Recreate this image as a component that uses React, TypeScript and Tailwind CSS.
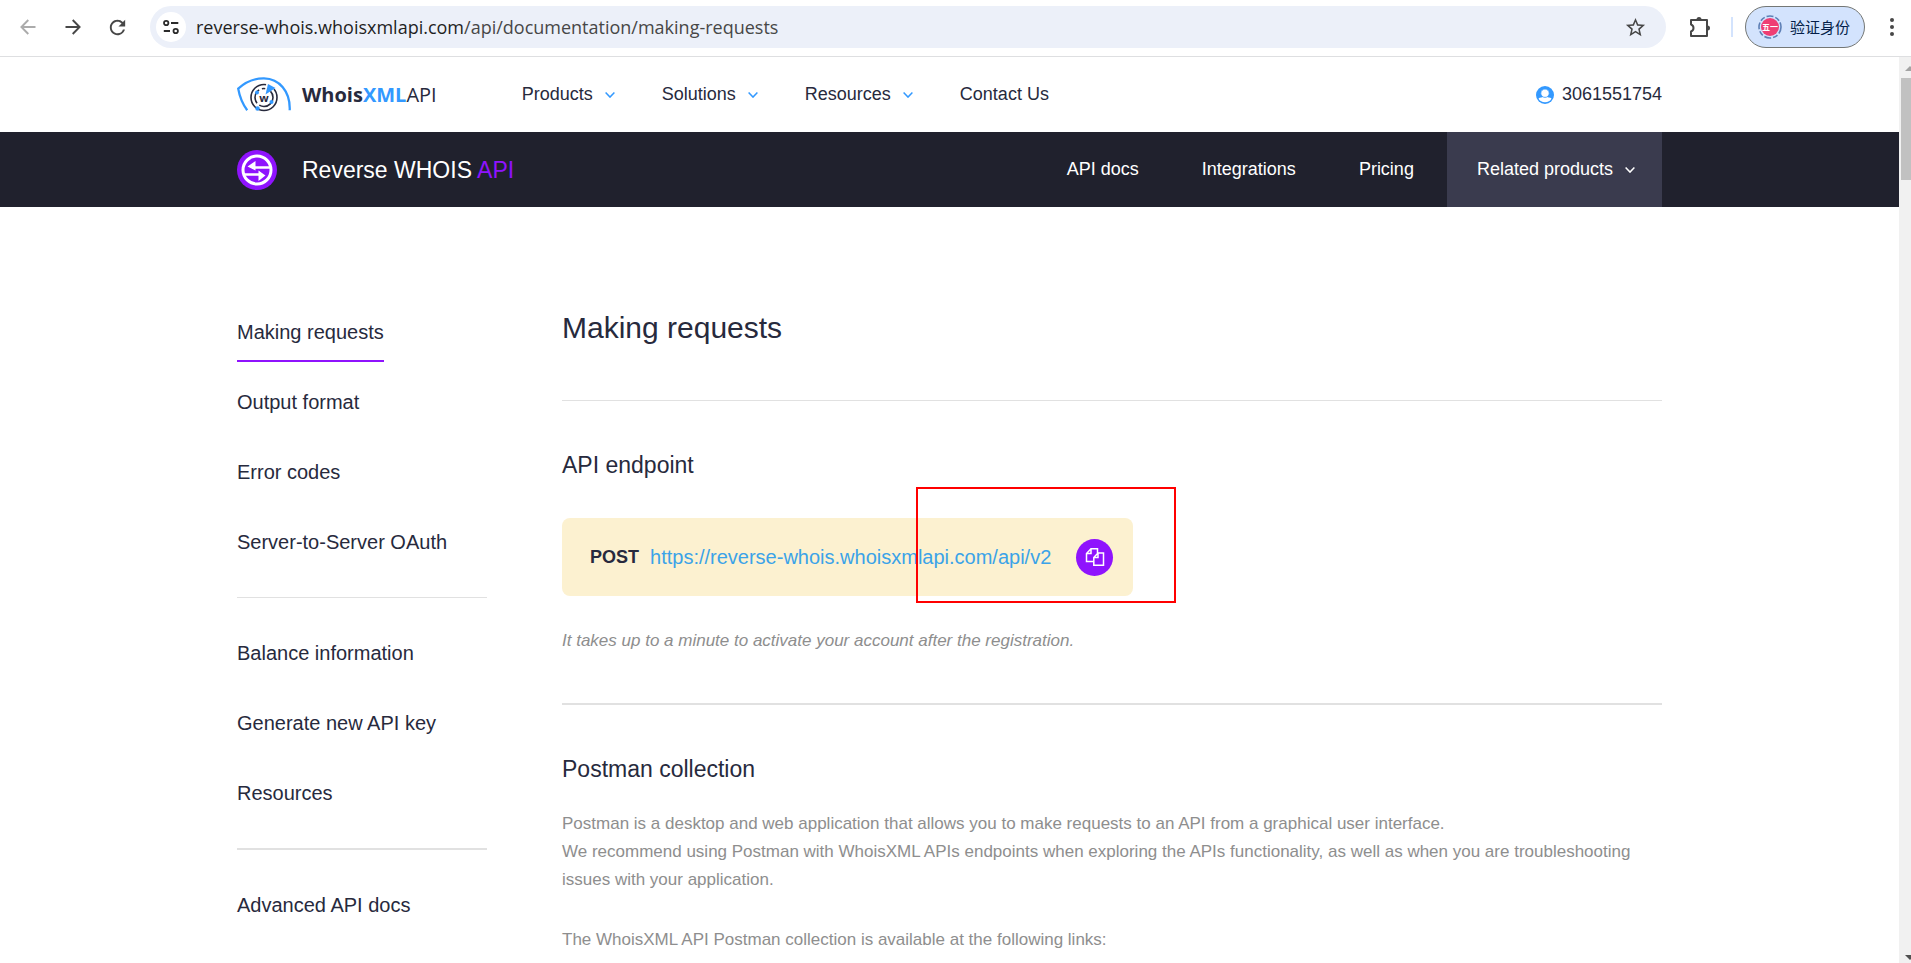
import type { ReactNode } from "react";
import { MdRefresh, MdStarBorder } from "react-icons/md";

const HEADER_LINKS = ["Products", "Solutions", "Resources"];
const PRODUCT_LINKS = ["API docs", "Integrations", "Pricing"];

const SIDEBAR = [
  ["Making requests", "Output format", "Error codes", "Server-to-Server OAuth"],
  ["Balance information", "Generate new API key", "Resources"],
  ["Advanced API docs"],
];

function Chevron({ className }: { className: string }) {
  return (
    <svg className={className} width="10" height="6" viewBox="0 0 10 6" fill="none" stroke="currentColor" strokeWidth="1.5">
      <path d="M0.6 0.6 5 5.1 9.4 0.6" />
    </svg>
  );
}

function Container({ children, className }: { children: ReactNode; className: string }) {
  return <div className={`mx-auto w-full max-w-[1425px] ${className}`}>{children}</div>;
}

function BrowserBar() {
  return (
    <div className="flex h-[57px] shrink-0 items-center border-b border-[#dedfe1] bg-white pb-[2px] pl-5 pr-[17px] text-[#474747]">
      <div className="flex shrink-0 items-center gap-[29px]">
        <button aria-label="Back" className="text-[#ababab]">
          <svg width="16" height="16" viewBox="0 0 16 16" fill="none" stroke="currentColor" strokeWidth="1.9">
            <path d="M15.5 8H1.8M8.3 1 1.4 8l6.9 7" />
          </svg>
        </button>
        <button aria-label="Forward">
          <svg width="16" height="16" viewBox="0 0 16 16" fill="none" stroke="currentColor" strokeWidth="1.9">
            <path d="M0.5 8h13.7M7.7 1l6.9 7-6.9 7" />
          </svg>
        </button>
        <button aria-label="Reload" className="-ml-1">
          <MdRefresh size={23} />
        </button>
      </div>
      <div className="ml-[21px] flex h-[42px] min-w-0 flex-1 items-center rounded-full bg-[#ecf0f9] pl-[6px] pr-[19px]">
        <button aria-label="Site information" className="flex size-[30px] shrink-0 items-center justify-center rounded-full bg-white">
          <svg width="16" height="16" viewBox="0 0 16 16" fill="none" stroke="#2b2b2b" strokeWidth="1.8">
            <circle cx="3.2" cy="4" r="2.2" />
            <path d="M8 4h7.3M0.8 12H7" />
            <circle cx="12.7" cy="12" r="2.2" />
          </svg>
        </button>
        <p className="ml-[10px] flex-1 truncate font-['Open_Sans','Noto_Sans',sans-serif] text-[18px] text-[#474747]">
          <span className="text-[#1f1f1f]">reverse-whois.whoisxmlapi.com</span>
          /api/documentation/making-requests
        </p>
        <button aria-label="Bookmark">
          <MdStarBorder size={23} />
        </button>
      </div>
      <button aria-label="Extensions" className="ml-[22px]">
        <svg width="24" height="24" viewBox="0 0 24 24" fill="none" stroke="currentColor" strokeWidth="2">
          <path d="M3 5H19V21H3V16.500A3.700 3.700 0 0 0 3 9.500Z" strokeLinejoin="round" />
          <path d="M8.500 4.500A2.500 2.500 0 0 1 13.500 4.500ZM19.500 10.500A2.500 2.500 0 0 1 19.500 15.500Z" fill="currentColor" stroke="none" />
        </svg>
      </button>
      <div className="ml-[19px] h-5 w-[2px] bg-[#d3e3fd]" />
      <button className="ml-3 flex h-[42px] items-center gap-2 rounded-full border border-[#747775] bg-[#d3e3fd] pl-3 pr-[14px] font-['Noto_Sans_CJK_SC',sans-serif] text-[15px] text-[#041e49]">
        <svg width="24" height="24" viewBox="0 0 24 24">
          <circle cx="12" cy="12" r="11" fill="none" stroke="#5d7fb5" strokeWidth="1.6" strokeDasharray="7 2 5 2" />
          <circle cx="12" cy="12" r="9" fill="#ef3e74" />
          <text x="12" y="15" fontSize="8" fontWeight="700" textAnchor="middle" fill="#fff">
            五一
          </text>
        </svg>
        验证身份
      </button>
      <button aria-label="Menu" className="ml-[25px]">
        <svg width="4" height="18" viewBox="0 0 4 18" fill="currentColor">
          <circle cx="2" cy="2" r="2" />
          <circle cx="2" cy="9" r="2" />
          <circle cx="2" cy="16" r="2" />
        </svg>
      </button>
    </div>
  );
}

function Logo() {
  return (
    <a href="#" className="flex items-center gap-[10px]">
      <svg width="55" height="35" viewBox="0 0 55 35" fill="none">
        <path d="M10.2 33.2C5.6 27 2.6 19.5 1.2 11.6 8.5 5 17.5 1.2 27 1.3 42 1.6 53.5 14 52.7 33.2" stroke="#3399ff" strokeWidth="2.3" />
        <circle cx="27" cy="20.500" r="13" stroke="#272a3d" strokeWidth="1.600" />
        <circle cx="27" cy="20.500" r="9" stroke="#272a3d" strokeWidth="1.600" strokeDasharray="19 3 15 3" />
        <path d="M27 18 29.5 5.5 40 10.500Z" fill="#fff" />
        <path d="M28.500 17.500 31 7 38.500 11Z" fill="#3399ff" />
        <circle cx="20" cy="15.500" r="2" fill="#3399ff" />
        <circle cx="34.500" cy="25" r="2" fill="#3399ff" />
        <circle cx="20.500" cy="31.500" r="2.200" fill="#3399ff" />
        <text x="27" y="24.500" fontSize="11" fontWeight="700" textAnchor="middle" fill="#272a3d" fontFamily="Open Sans, sans-serif">
          w
        </text>
      </svg>
      <span className="font-['Open_Sans','Noto_Sans',sans-serif] text-[20px] leading-6 text-[#272a3d]">
        <b>Whois</b>
        <b className="text-[#3399ff]">XML</b>
        API
      </span>
    </a>
  );
}

function SiteHeader() {
  return (
    <header className="bg-white text-[18px]">
      <Container className="flex h-[75px] items-center">
        <Logo />
        <nav className="ml-[85px] flex flex-1 items-center gap-[47px]">
          {HEADER_LINKS.map((label) => (
            <a key={label} href="#" className="flex items-center gap-3">
              {label}
              <Chevron className="text-[#3399ff]" />
            </a>
          ))}
          <a href="#">Contact Us</a>
        </nav>
        <a href="#" className="flex items-center gap-[8px]">
          <svg width="18" height="18" viewBox="0 0 18 18">
            <circle cx="9" cy="9" r="9" fill="#3399ff" />
            <path d="M2.500 12.500C5 10.500 13 10.500 15.500 12.500 13.500 17.500 4.500 17.500 2.500 12.500Z" fill="#fff" />
            <circle cx="9" cy="7.200" r="4.200" fill="#fff" stroke="#3399ff" strokeWidth="0.800" />
          </svg>
          3061551754
        </a>
      </Container>
    </header>
  );
}

function ProductBar() {
  return (
    <div className="bg-[#20212d] text-white">
      <Container className="flex h-[75px] items-center text-[18px]">
        <svg width="40" height="40" viewBox="0 0 40 40" fill="none">
          <circle cx="20" cy="20" r="20" fill="#8f13fd" />
          <circle cx="20" cy="20" r="14" stroke="#fff" strokeWidth="3" />
          <path d="M34 17.500H15M6 24.500H25" stroke="#fff" strokeWidth="2.500" />
          <path d="M10.500 16.500 18.500 11V20.500ZM28.500 25.500 21.500 20.500V31Z" fill="#fff" />
        </svg>
        <a href="#" className="ml-[25px] flex-1 text-[23px] leading-7">
          Reverse WHOIS <span className="text-[#8f13fd]">API</span>
        </a>
        <nav className="flex items-center gap-[63px] pr-[33px]">
          {PRODUCT_LINKS.map((label) => (
            <a key={label} href="#">
              {label}
            </a>
          ))}
        </nav>
        <button className="flex h-full items-center gap-3 bg-[#3a3b4e] pl-[30px] pr-[27px]">
          Related products
          <Chevron className="text-white" />
        </button>
      </Container>
    </div>
  );
}

function Sidebar() {
  return (
    <aside className="w-[250px] shrink-0 pt-[5px] text-[20px] leading-8">
      {SIDEBAR.map((group, i) => (
        <ul
          key={i}
          className={`flex flex-col gap-6 border-[#e1e1e1] ${i === 0 ? "" : "pt-[39px]"} ${
            i === 0 ? "border-b pb-[25px]" : i === 1 ? "border-b-2 pb-[25px]" : ""
          }`}
        >
          {group.map((label) => (
            <li key={label}>
              <a
                href="#"
                className={`inline-block border-b-2 pb-3 align-top ${
                  label === "Making requests" ? "border-[#8f13fd]" : "border-transparent"
                }`}
              >
                {label}
              </a>
            </li>
          ))}
        </ul>
      ))}
    </aside>
  );
}

function Endpoint() {
  return (
    <div className="relative mt-[39px] flex h-[78px] w-fit items-center rounded-lg bg-[#fcf1d0] pl-7 pr-5">
      <b className="text-[18px]">POST</b>
      <a href="#" className="ml-[11px] text-[20px] text-[#3ba3e8]">
        https://reverse-whois.whoisxmlapi.com/api/v2
      </a>
      <button aria-label="Copy" className="ml-[25px] flex size-[37px] items-center justify-center rounded-full bg-[#8f13fd]">
        <svg width="20" height="20" viewBox="0 0 20 20" fill="none" stroke="#fff" strokeWidth="1.500">
          <path d="M8.500 14.500H1.500V6.500L6 1.800H12.500V6M6 2V6.500H1.500" />
          <path d="M8.800 10.500 13 6H18.500V18.300H8.800ZM13 6V10.500H8.800" />
        </svg>
      </button>
      <div className="pointer-events-none absolute -right-[43px] -top-[31px] h-[116px] w-[260px] border-2 border-[#ff0000]" />
    </div>
  );
}

function Content() {
  return (
    <main className="min-w-0 flex-1 text-[17px] leading-7">
      <h1 className="text-[30px] leading-[34px]">Making requests</h1>
      <hr className="mt-[55px] border-t border-[#e1e1e1]" />
      <h2 className="mt-[50px] text-[23px]">API endpoint</h2>
      <Endpoint />
      <p className="mt-[31px] italic text-[#8e8e8e]">It takes up to a minute to activate your account after the registration.</p>
      <hr className="mt-[48px] border-t-2 border-[#e1e1e1]" />
      <h2 className="mt-[50px] text-[23px]">Postman collection</h2>
      <p className="mt-[27px] text-[#8e8e8e]">
        Postman is a desktop and web application that allows you to make requests to an API from a graphical user interface.
        <br />
        We recommend using Postman with WhoisXML APIs endpoints when exploring the APIs functionality, as well as when you are
        troubleshooting issues with your application.
      </p>
      <p className="mt-8 text-[#8e8e8e]">The WhoisXML API Postman collection is available at the following links:</p>
    </main>
  );
}

function Scrollbar() {
  return (
    <div className="flex w-3 shrink-0 flex-col overflow-hidden bg-[#f1f1f1] pl-[2px]">
      <svg className="ml-1 mt-[9px] shrink-0" width="10" height="5" viewBox="0 0 10 5" fill="#a3a3a3">
        <path d="M5 0 10 5H0Z" />
      </svg>
      <div className="mt-[7px] h-[102px] bg-[#c1c1c1]" />
      <svg className="mb-[3px] ml-1 mt-auto shrink-0" width="10" height="5" viewBox="0 0 10 5" fill="#505050">
        <path d="M0 0H10L5 5Z" />
      </svg>
    </div>
  );
}

export default function App() {
  return (
    <div className="flex h-screen flex-col overflow-hidden bg-white font-['Liberation_Sans',Arial,sans-serif] text-[#272a3d]">
      <BrowserBar />
      <div className="flex min-h-0 flex-1">
        <div className="min-w-0 flex-1 overflow-hidden">
          <SiteHeader />
          <ProductBar />
          <Container className="flex gap-[75px] pt-[104px]">
            <Sidebar />
            <Content />
          </Container>
        </div>
        <Scrollbar />
      </div>
    </div>
  );
}
